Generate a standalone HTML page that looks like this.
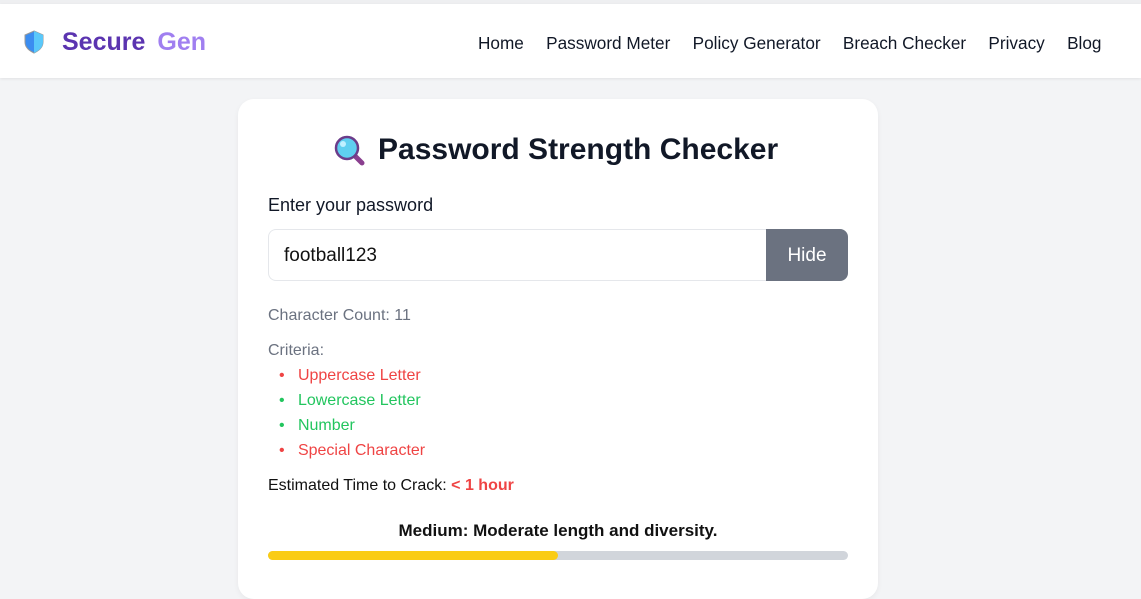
<!DOCTYPE html>
<html><head><meta charset="utf-8"><style>
body{margin:0;width:1141px;height:581px;overflow:hidden;background:#f3f4f6;font-family:"Liberation Sans",sans-serif;position:relative}
.top{position:absolute;top:0;left:0;right:0;height:4px;background:#eeeff1}
.nav{position:absolute;top:4px;left:0;right:0;height:74px;background:#fff;box-shadow:0 1px 3px rgba(0,0,0,.08)}
.logo{position:absolute;left:62px;top:24px;font-size:25px;font-weight:bold;color:#5b34b0}
.logo span{color:#a07ff0;margin-left:12px}
.links{position:absolute;top:29px;left:478px;font-size:17.2px;color:#111827;white-space:nowrap}
.links a{margin-right:17.5px;color:#111827;text-decoration:none}
.card{position:absolute;left:238px;top:99px;width:640px;height:500px;background:#fff;border-radius:16px;box-shadow:0 2px 6px rgba(0,0,0,.05)}
h1{position:absolute;left:378px;top:133px;margin:0;font-size:30px;color:#111827;font-weight:bold;white-space:nowrap}
.t{position:absolute;font-size:16px}
</style></head><body>
<div class="top"></div>
<div class="nav">
<svg style="position:absolute;left:24px;top:26px" width="20" height="24" viewBox="0 0 20 24"><path d="M10 1 L19 5 V12 C19 18 14 21 10 23 C6 21 1 18 1 12 V5Z" fill="#3b8df0" stroke="#999" stroke-width="1"/><path d="M10 1 L19 5 V12 C19 18 14 21 10 23Z" fill="#5ac8fa"/></svg>
<div class="logo">Secure<span>Gen</span></div>
<div class="links"><a>Home</a> <a>Password Meter</a> <a>Policy Generator</a> <a>Breach Checker</a> <a>Privacy</a> <a>Blog</a></div>
</div>
<div class="card"></div>
<svg style="position:absolute;left:334px;top:135px" width="32" height="32" viewBox="0 0 32 32"><line x1="19" y1="19" x2="28" y2="28" stroke="#8a3f8f" stroke-width="5" stroke-linecap="round"/><circle cx="13" cy="13" r="11" fill="#5fcff0" stroke="#6b3c8a" stroke-width="2.5"/><circle cx="9" cy="9" r="3" fill="#bff0ff"/></svg>
<h1>Password Strength Checker</h1>
<div class="t" style="left:268px;top:195px;font-size:18px;color:#111827">Enter your password</div>
<div style="position:absolute;left:268px;top:229px;width:498px;height:52px;border:1px solid #e5e7eb;border-right:none;border-radius:8px 0 0 8px;font-size:19px;line-height:52px;padding-left:15px;box-sizing:border-box;color:#111">football123</div>
<div style="position:absolute;left:766px;top:229px;width:82px;height:52px;background:#6b7280;border-radius:0 8px 8px 0;color:#fff;font-size:19px;text-align:center;line-height:54px">Hide</div>
<div class="t" style="left:268px;top:307px;color:#6b7280">Character Count: 11</div>
<div class="t" style="left:268px;top:342px;color:#6b7280">Criteria:</div>
<div class="t" style="left:279px;top:367px;color:#ef4444">•&nbsp;&nbsp;&nbsp;Uppercase Letter</div>
<div class="t" style="left:279px;top:392px;color:#22c55e">•&nbsp;&nbsp;&nbsp;Lowercase Letter</div>
<div class="t" style="left:279px;top:417px;color:#22c55e">•&nbsp;&nbsp;&nbsp;Number</div>
<div class="t" style="left:279px;top:442px;color:#ef4444">•&nbsp;&nbsp;&nbsp;Special Character</div>
<div class="t" style="left:268px;top:477px;color:#111">Estimated Time to Crack: <b style="color:#ef4444">&lt; 1 hour</b></div>
<div class="t" style="left:268px;width:580px;text-align:center;top:521px;color:#111;font-weight:bold;font-size:17px">Medium: Moderate length and diversity.</div>
<div style="position:absolute;left:268px;top:551px;width:580px;height:9px;background:#d1d5db;border-radius:5px"><div style="width:290px;height:9px;background:#facc15;border-radius:5px"></div></div>
</body></html>
